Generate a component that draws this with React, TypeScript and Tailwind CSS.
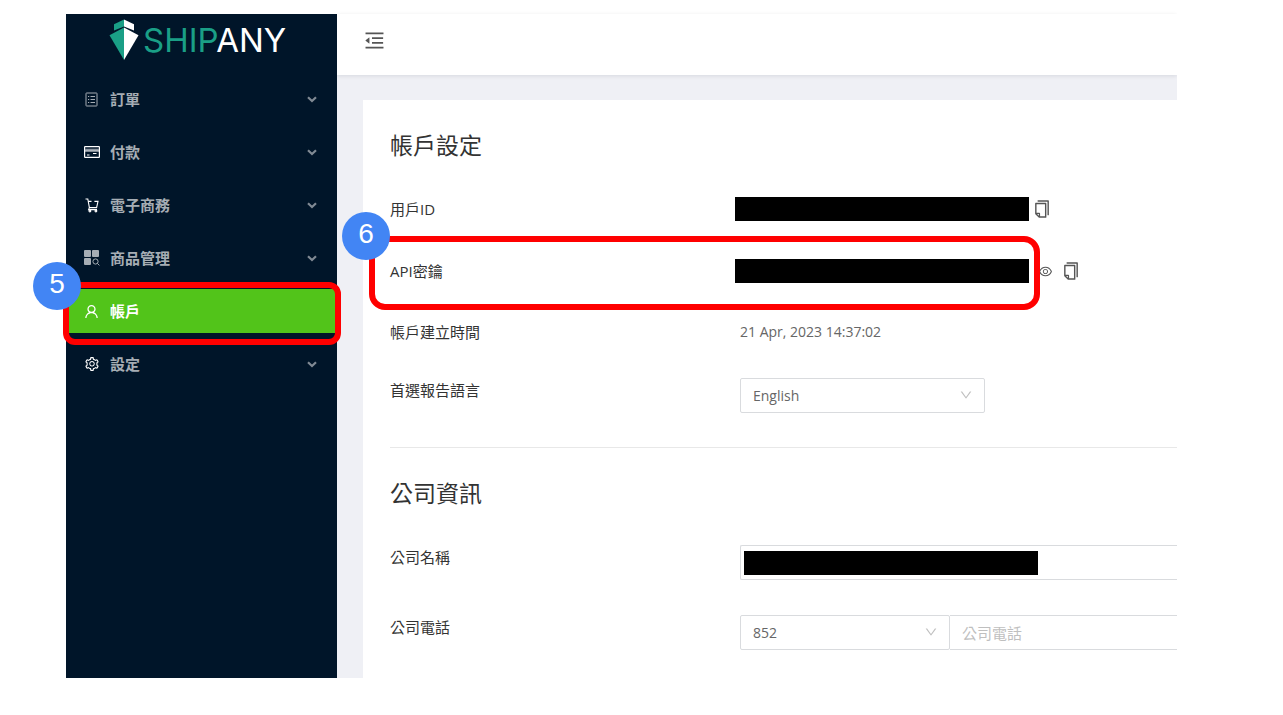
import type { ReactNode } from "react";
import clsx from "clsx";
import {
  AiOutlineCopy,
  AiOutlineDown,
  AiOutlineEye,
  AiOutlineMenuFold,
  AiOutlineSetting,
  AiOutlineUser,
} from "react-icons/ai";

function OrderIcon() {
  return (
    <svg width="13" height="15" viewBox="0 0 13 15" fill="none" stroke="currentColor" aria-hidden="true">
      <rect x="1" y="1" width="11" height="13" rx="0.5" />
      <path d="M3 4.5H4.2M5.5 4.5H10M3 7.5H4.2M5.5 7.5H10M3 10.5H4.2M5.5 10.5H10" />
    </svg>
  );
}

function CardIcon() {
  return (
    <svg width="16" height="12" viewBox="0 0 16 12" fill="none" stroke="#fff" aria-hidden="true">
      <rect x="0.6" y="0.6" width="14.8" height="10.8" rx="0.6" strokeWidth="1.2" />
      <path d="M1 3.7H15" stroke="#8a949f" strokeWidth="2" />
      <path d="M1 5H15M9 7.5H12.5M3 9H5.5" />
    </svg>
  );
}

function CartIcon() {
  return (
    <svg width="14" height="15" viewBox="0 0 14 15" fill="none" stroke="#fff" strokeWidth="1.1" aria-hidden="true">
      <path d="M0.5 1H2.8L4.4 9.6H11.6L13 3.4H9.4M3.2 3.4H6.5" />
      <path d="M4.4 9.6L3.6 11.6H12" />
      <circle cx="4.9" cy="13" r="0.9" />
      <circle cx="10.9" cy="13" r="0.9" />
    </svg>
  );
}

function ProductIcon() {
  return (
    <svg width="16" height="16" viewBox="0 0 16 16" fill="currentColor" aria-hidden="true">
      <rect x="0" y="0" width="7" height="7" rx="1" />
      <rect x="8" y="0" width="7" height="7" rx="1" />
      <rect x="0" y="8" width="7" height="7" rx="1" />
      <circle cx="11.5" cy="11.5" r="2.6" fill="none" stroke="currentColor" />
      <path d="M13.4 13.4L15.4 15.4" stroke="currentColor" />
    </svg>
  );
}

function ShipMark() {
  return (
    <svg width="30" height="42" viewBox="0 0 30 42" aria-hidden="true">
      <path d="M15 0.5L5 5.2V11.6L15 7.4Z" fill="#1a9f86" />
      <path d="M15 0.5L25 5.2V11.6L15 7.4Z" fill="#fff" />
      <path d="M15 8.6L0.5 16.2L15 41Z" fill="#1a9f86" />
      <path d="M15 8.6L29.5 16.2L15 41Z" fill="#fff" />
    </svg>
  );
}

function Chevron() {
  return (
    <svg width="10" height="7" viewBox="0 0 10 7" fill="none" stroke="#808a94" strokeWidth="2.2" aria-hidden="true">
      <path d="M1 1.2L5 5L9 1.2" />
    </svg>
  );
}

const menu = [
  { label: "訂單", icon: <OrderIcon /> },
  { label: "付款", icon: <CardIcon /> },
  { label: "電子商務", icon: <CartIcon /> },
  { label: "商品管理", icon: <ProductIcon /> },
  { label: "帳戶", icon: <AiOutlineUser size={17} />, active: true },
  { label: "設定", icon: <AiOutlineSetting size={16} className="text-white" /> },
];

function Step({ n, className }: { n: number; className: string }) {
  return (
    <span
      className={clsx(
        "absolute z-10 flex size-12 items-center justify-center rounded-full bg-[#4285f4] pb-1 font-['Liberation_Sans',sans-serif] text-[28px] font-normal text-white",
        className
      )}
    >
      {n}
    </span>
  );
}

function Redacted() {
  return <div className="h-6 w-[294px] shrink-0 bg-black" />;
}

function CopyButton({ label }: { label: string }) {
  return (
    <button type="button" aria-label={label} className="text-[#555]">
      <AiOutlineCopy size={20} />
    </button>
  );
}

type SelectProps = { id: string; value: string; className: string; label?: string };

function Select({ id, value, className, label }: SelectProps) {
  return (
    <div className={clsx("relative shrink-0", className)}>
      <select
        id={id}
        aria-label={label}
        className="h-[35px] w-full appearance-none rounded-xs border border-[#d9dbde] bg-white px-3 text-sm text-[#666]"
      >
        <option>{value}</option>
      </select>
      <AiOutlineDown size={14} className="pointer-events-none absolute top-2.5 right-3 text-[#bfbfbf]" />
    </div>
  );
}

function Field({ label, htmlFor, children }: { label: string; htmlFor: string; children: ReactNode }) {
  return (
    <div className="flex items-start">
      <label htmlFor={htmlFor} className="w-[350px] shrink-0 text-[15px] leading-6">
        {label}
      </label>
      {children}
    </div>
  );
}

export default function App() {
  return (
    <div className="flex bg-white pt-3.5 pr-[106px] pb-9 pl-[66px] font-['Open_Sans','Noto_Sans_CJK_TC',sans-serif] text-[#333]">
      <aside className="relative z-10 w-[271px] shrink-0 bg-[#001529]">
        <div className="flex h-[63px] items-start gap-1 pt-[5px] pl-[43px]">
          <ShipMark />
          <span className="font-['Inter',sans-serif] text-[33px] leading-[42px] text-white">
            <span className="text-[#1a9f86]">SHIP</span>ANY
          </span>
        </div>
        <nav className="flex flex-col gap-[9px]">
          {menu.map((item) => (
            <a
              key={item.label}
              href="#"
              className={clsx(
                "relative flex h-11 items-center pr-5 pl-[17px] text-[15px] font-bold",
                item.active ? "bg-[#52c41a] text-white" : "text-[#a6adb4]"
              )}
            >
              <span className="flex w-[27px] items-center">
                <span className="flex w-[17px] justify-center">{item.icon}</span>
              </span>
              <span className="flex-1">{item.label}</span>
              {!item.active && <Chevron />}
              {item.active && (
                <>
                  <span className="absolute -top-[7px] -right-1 -bottom-3 -left-[3px] z-10 rounded-xl border-6 border-[#f00]" />
                  <Step n={5} className="-top-[27px] -left-[33px]" />
                </>
              )}
            </a>
          ))}
        </nav>
      </aside>

      <main className="min-w-0 flex-1 overflow-x-clip bg-[#eff0f5]">
        <header className="flex h-[61px] items-center bg-white px-[26px] shadow-[0_1px_4px_rgba(0,21,41,0.1)]">
          <button type="button" aria-label="收合選單" className="mb-2 text-[#555]">
            <AiOutlineMenuFold size={23} />
          </button>
        </header>

        <section className="relative z-10 mt-[25px] ml-[26px] bg-white pt-[29px] pb-7 pl-[27px]">
          <h2 className="mb-[17px] text-[23px] leading-8">帳戶設定</h2>

          <div className="flex h-[62px] items-center text-[15px]">
            <span className="w-[345px] shrink-0">用戶ID</span>
            <Redacted />
            <div className="ml-[3px] flex">
              <CopyButton label="複製用戶ID" />
            </div>
          </div>

          <div className="relative flex h-[62px] items-center text-[15px]">
            <span className="w-[345px] shrink-0">API密鑰</span>
            <Redacted />
            <div className="ml-[9px] flex items-center gap-2">
              <button type="button" aria-label="顯示API密鑰" className="text-[#555]">
                <AiOutlineEye size={15} />
              </button>
              <CopyButton label="複製API密鑰" />
            </div>
            <span className="pointer-events-none absolute -top-1 -left-[21px] h-[74px] w-[671px] rounded-2xl border-6 border-[#f00]" />
            <Step n={6} className="-top-7 -left-12" />
          </div>

          <div className="flex h-[60px] items-center">
            <span className="w-[350px] shrink-0 text-[15px]">帳戶建立時間</span>
            <span className="text-sm text-[#666]">21 Apr, 2023 14:37:02</span>
          </div>

          <div className="pt-4">
            <Field label="首選報告語言" htmlFor="language">
              <Select id="language" value="English" className="w-[245px]" />
            </Field>
          </div>

          <hr className="mt-[34px] border-[#e8e8e8]" />

          <h2 className="mt-[29px] mb-9 text-[23px] leading-8">公司資訊</h2>

          <div className="flex flex-col gap-[35px]">
            <Field label="公司名稱" htmlFor="company">
              <div className="relative flex-1">
                <input
                  id="company"
                  type="text"
                  className="block h-[35px] w-full rounded-l-xs border border-r-0 border-[#d9dbde] px-3 text-sm"
                />
                <div className="absolute top-1.5 left-1">
                  <Redacted />
                </div>
              </div>
            </Field>
            <Field label="公司電話" htmlFor="phone">
              <Select id="phone-code" label="區號" value="852" className="w-[210px]" />
              <input
                id="phone"
                type="tel"
                placeholder="公司電話"
                className="h-[35px] min-w-0 flex-1 border-y border-[#d9dbde] px-3 text-[15px] placeholder:text-[#bfbfbf]"
              />
            </Field>
          </div>
        </section>
      </main>
    </div>
  );
}
